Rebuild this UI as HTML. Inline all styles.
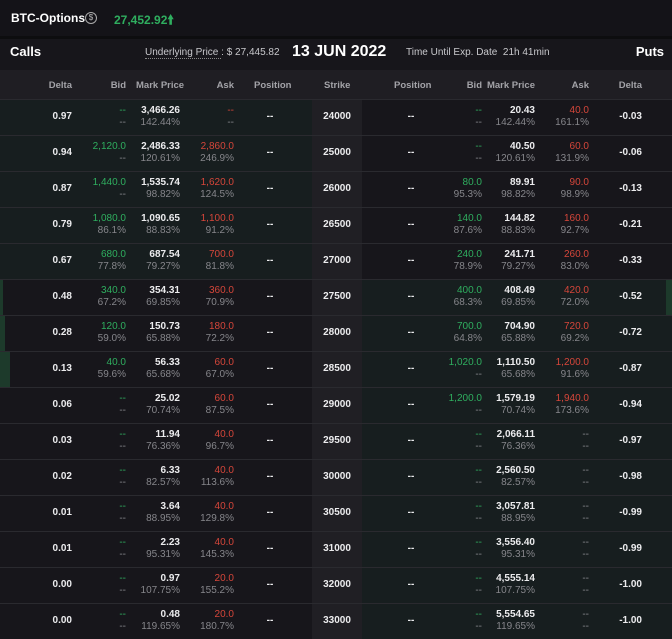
<!DOCTYPE html><html><head><style>
*{margin:0;padding:0;box-sizing:border-box}
body{width:672px;height:638px;background:#17161b;font-family:"Liberation Sans",sans-serif;position:relative;overflow:hidden;color:#e8e8ea}
.a{position:absolute;white-space:nowrap}
.top{left:0;top:0;width:672px;height:36px;background:#141318}
.sep{left:0;top:36px;width:672px;height:3px;background:#0d0d0f}
.bar2{left:0;top:39px;width:672px;height:31px;background:#17161b}
.hdr{left:0;top:70px;width:672px;height:29px;background:#1f1e23}
.h{top:80px;font-size:9.5px;font-weight:bold;color:#a3a3a8}
.row{position:absolute;left:0;width:672px;height:36px;border-top:1px solid #2a2a2f}
.itmc{position:absolute;left:0;top:0;width:312px;height:35px;background:#171e1f}
.itmp{position:absolute;left:362px;top:0;width:310px;height:35px;background:#171e1f}
.stk{position:absolute;left:312px;top:0;width:50px;height:35px;background:#201f24}
.row span{position:absolute;white-space:nowrap;font-size:10px}
.t{top:5px;font-weight:bold;color:#ececee}
.b{top:17px;color:#86868b}
.m{top:11px;font-weight:bold;color:#ececee}
.g{color:#2fae5f!important;font-weight:normal!important}
.r{color:#d5463a!important;font-weight:normal!important}
.dl{right:600px}.cb{right:546px}.cm{right:492px}.ca{right:438px}
.cp{left:250px;width:40px;text-align:center}
.sk{left:312px;width:50px;text-align:center}
.pp{left:391px;width:40px;text-align:center}
.pb{right:190px}.pm{right:137px}.pa{right:83px}.pd{right:30px}
.gb{position:absolute;left:0;top:0;height:35px;background:#1d3a2b}
</style></head><body>
<div class="a top"></div><div class="a sep"></div><div class="a bar2"></div><div class="a hdr"></div>
<div class="a" style="left:11px;top:11px;font-size:12px;font-weight:bold;color:#fff">BTC-Options</div>
<div class="a" style="left:85px;top:12px;width:12px;height:12px;border:1.5px solid #aaa;border-radius:50%;font-size:8px;color:#bbb;text-align:center;line-height:9px">$</div>
<div class="a" style="left:114px;top:11px;font-size:12px;font-weight:bold;color:#2fae5f">27,452.92<b style="font-size:13px">&#129049;</b></div>
<div class="a" style="left:10px;top:44px;font-size:13px;font-weight:bold;color:#fff">Calls</div>
<div class="a" style="left:145px;top:47px;font-size:10px;color:#c8c8cc"><span style="border-bottom:1px dotted #888">Underlying Price </span>: $ 27,445.82</div>
<div class="a" style="left:292px;top:43px;font-size:16px;font-weight:bold;color:#fff">13 JUN 2022</div>
<div class="a" style="left:406px;top:47px;font-size:10px;color:#c8c8cc">Time Until Exp. Date &nbsp;21h 41min</div>
<div class="a" style="right:8px;top:44px;font-size:13px;font-weight:bold;color:#fff">Puts</div>
<div class="a h" style="right:600px">Delta</div><div class="a h" style="right:546px">Bid</div><div class="a h" style="left:136px">Mark Price</div><div class="a h" style="right:438px">Ask</div><div class="a h" style="left:254px">Position</div><div class="a h" style="left:324px">Strike</div><div class="a h" style="left:394px">Position</div><div class="a h" style="right:190px">Bid</div><div class="a h" style="right:137px">Mark Price</div><div class="a h" style="right:83px">Ask</div><div class="a h" style="right:30px">Delta</div>

<div class="row" style="top:99px"><div class="itmc"></div><div class="stk"></div><span class="m dl">0.97</span><span class="t cb g">--</span><span class="b cb">--</span><span class="t cm">3,466.26</span><span class="b cm">142.44%</span><span class="t ca r">--</span><span class="b ca">--</span><span class="m cp">--</span><span class="m sk">24000</span><span class="m pp">--</span><span class="t pb g">--</span><span class="b pb">--</span><span class="t pm">20.43</span><span class="b pm">142.44%</span><span class="t pa r">40.0</span><span class="b pa">161.1%</span><span class="m pd">-0.03</span></div>
<div class="row" style="top:135px"><div class="itmc"></div><div class="stk"></div><span class="m dl">0.94</span><span class="t cb g">2,120.0</span><span class="b cb">--</span><span class="t cm">2,486.33</span><span class="b cm">120.61%</span><span class="t ca r">2,860.0</span><span class="b ca">246.9%</span><span class="m cp">--</span><span class="m sk">25000</span><span class="m pp">--</span><span class="t pb g">--</span><span class="b pb">--</span><span class="t pm">40.50</span><span class="b pm">120.61%</span><span class="t pa r">60.0</span><span class="b pa">131.9%</span><span class="m pd">-0.06</span></div>
<div class="row" style="top:171px"><div class="itmc"></div><div class="stk"></div><span class="m dl">0.87</span><span class="t cb g">1,440.0</span><span class="b cb">--</span><span class="t cm">1,535.74</span><span class="b cm">98.82%</span><span class="t ca r">1,620.0</span><span class="b ca">124.5%</span><span class="m cp">--</span><span class="m sk">26000</span><span class="m pp">--</span><span class="t pb g">80.0</span><span class="b pb">95.3%</span><span class="t pm">89.91</span><span class="b pm">98.82%</span><span class="t pa r">90.0</span><span class="b pa">98.9%</span><span class="m pd">-0.13</span></div>
<div class="row" style="top:207px"><div class="itmc"></div><div class="stk"></div><span class="m dl">0.79</span><span class="t cb g">1,080.0</span><span class="b cb">86.1%</span><span class="t cm">1,090.65</span><span class="b cm">88.83%</span><span class="t ca r">1,100.0</span><span class="b ca">91.2%</span><span class="m cp">--</span><span class="m sk">26500</span><span class="m pp">--</span><span class="t pb g">140.0</span><span class="b pb">87.6%</span><span class="t pm">144.82</span><span class="b pm">88.83%</span><span class="t pa r">160.0</span><span class="b pa">92.7%</span><span class="m pd">-0.21</span></div>
<div class="row" style="top:243px"><div class="itmc"></div><div class="stk"></div><span class="m dl">0.67</span><span class="t cb g">680.0</span><span class="b cb">77.8%</span><span class="t cm">687.54</span><span class="b cm">79.27%</span><span class="t ca r">700.0</span><span class="b ca">81.8%</span><span class="m cp">--</span><span class="m sk">27000</span><span class="m pp">--</span><span class="t pb g">240.0</span><span class="b pb">78.9%</span><span class="t pm">241.71</span><span class="b pm">79.27%</span><span class="t pa r">260.0</span><span class="b pa">83.0%</span><span class="m pd">-0.33</span></div>
<div class="row" style="top:279px"><div class="gb" style="width:3px"></div><div class="itmp"></div><div class="gb" style="left:666px;width:6px"></div><div class="stk"></div><span class="m dl">0.48</span><span class="t cb g">340.0</span><span class="b cb">67.2%</span><span class="t cm">354.31</span><span class="b cm">69.85%</span><span class="t ca r">360.0</span><span class="b ca">70.9%</span><span class="m cp">--</span><span class="m sk">27500</span><span class="m pp">--</span><span class="t pb g">400.0</span><span class="b pb">68.3%</span><span class="t pm">408.49</span><span class="b pm">69.85%</span><span class="t pa r">420.0</span><span class="b pa">72.0%</span><span class="m pd">-0.52</span></div>
<div class="row" style="top:315px"><div class="gb" style="width:5px"></div><div class="itmp"></div><div class="stk"></div><span class="m dl">0.28</span><span class="t cb g">120.0</span><span class="b cb">59.0%</span><span class="t cm">150.73</span><span class="b cm">65.88%</span><span class="t ca r">180.0</span><span class="b ca">72.2%</span><span class="m cp">--</span><span class="m sk">28000</span><span class="m pp">--</span><span class="t pb g">700.0</span><span class="b pb">64.8%</span><span class="t pm">704.90</span><span class="b pm">65.88%</span><span class="t pa r">720.0</span><span class="b pa">69.2%</span><span class="m pd">-0.72</span></div>
<div class="row" style="top:351px"><div class="gb" style="width:10px"></div><div class="itmp"></div><div class="stk"></div><span class="m dl">0.13</span><span class="t cb g">40.0</span><span class="b cb">59.6%</span><span class="t cm">56.33</span><span class="b cm">65.68%</span><span class="t ca r">60.0</span><span class="b ca">67.0%</span><span class="m cp">--</span><span class="m sk">28500</span><span class="m pp">--</span><span class="t pb g">1,020.0</span><span class="b pb">--</span><span class="t pm">1,110.50</span><span class="b pm">65.68%</span><span class="t pa r">1,200.0</span><span class="b pa">91.6%</span><span class="m pd">-0.87</span></div>
<div class="row" style="top:387px"><div class="itmp"></div><div class="stk"></div><span class="m dl">0.06</span><span class="t cb g">--</span><span class="b cb">--</span><span class="t cm">25.02</span><span class="b cm">70.74%</span><span class="t ca r">60.0</span><span class="b ca">87.5%</span><span class="m cp">--</span><span class="m sk">29000</span><span class="m pp">--</span><span class="t pb g">1,200.0</span><span class="b pb">--</span><span class="t pm">1,579.19</span><span class="b pm">70.74%</span><span class="t pa r">1,940.0</span><span class="b pa">173.6%</span><span class="m pd">-0.94</span></div>
<div class="row" style="top:423px"><div class="itmp"></div><div class="stk"></div><span class="m dl">0.03</span><span class="t cb g">--</span><span class="b cb">--</span><span class="t cm">11.94</span><span class="b cm">76.36%</span><span class="t ca r">40.0</span><span class="b ca">96.7%</span><span class="m cp">--</span><span class="m sk">29500</span><span class="m pp">--</span><span class="t pb g">--</span><span class="b pb">--</span><span class="t pm">2,066.11</span><span class="b pm">76.36%</span><span class="b pa" style="top:5px">--</span><span class="b pa">--</span><span class="m pd">-0.97</span></div>
<div class="row" style="top:459px"><div class="itmp"></div><div class="stk"></div><span class="m dl">0.02</span><span class="t cb g">--</span><span class="b cb">--</span><span class="t cm">6.33</span><span class="b cm">82.57%</span><span class="t ca r">40.0</span><span class="b ca">113.6%</span><span class="m cp">--</span><span class="m sk">30000</span><span class="m pp">--</span><span class="t pb g">--</span><span class="b pb">--</span><span class="t pm">2,560.50</span><span class="b pm">82.57%</span><span class="b pa" style="top:5px">--</span><span class="b pa">--</span><span class="m pd">-0.98</span></div>
<div class="row" style="top:495px"><div class="itmp"></div><div class="stk"></div><span class="m dl">0.01</span><span class="t cb g">--</span><span class="b cb">--</span><span class="t cm">3.64</span><span class="b cm">88.95%</span><span class="t ca r">40.0</span><span class="b ca">129.8%</span><span class="m cp">--</span><span class="m sk">30500</span><span class="m pp">--</span><span class="t pb g">--</span><span class="b pb">--</span><span class="t pm">3,057.81</span><span class="b pm">88.95%</span><span class="b pa" style="top:5px">--</span><span class="b pa">--</span><span class="m pd">-0.99</span></div>
<div class="row" style="top:531px"><div class="itmp"></div><div class="stk"></div><span class="m dl">0.01</span><span class="t cb g">--</span><span class="b cb">--</span><span class="t cm">2.23</span><span class="b cm">95.31%</span><span class="t ca r">40.0</span><span class="b ca">145.3%</span><span class="m cp">--</span><span class="m sk">31000</span><span class="m pp">--</span><span class="t pb g">--</span><span class="b pb">--</span><span class="t pm">3,556.40</span><span class="b pm">95.31%</span><span class="b pa" style="top:5px">--</span><span class="b pa">--</span><span class="m pd">-0.99</span></div>
<div class="row" style="top:567px"><div class="itmp"></div><div class="stk"></div><span class="m dl">0.00</span><span class="t cb g">--</span><span class="b cb">--</span><span class="t cm">0.97</span><span class="b cm">107.75%</span><span class="t ca r">20.0</span><span class="b ca">155.2%</span><span class="m cp">--</span><span class="m sk">32000</span><span class="m pp">--</span><span class="t pb g">--</span><span class="b pb">--</span><span class="t pm">4,555.14</span><span class="b pm">107.75%</span><span class="b pa" style="top:5px">--</span><span class="b pa">--</span><span class="m pd">-1.00</span></div>
<div class="row" style="top:603px"><div class="itmp"></div><div class="stk"></div><span class="m dl">0.00</span><span class="t cb g">--</span><span class="b cb">--</span><span class="t cm">0.48</span><span class="b cm">119.65%</span><span class="t ca r">20.0</span><span class="b ca">180.7%</span><span class="m cp">--</span><span class="m sk">33000</span><span class="m pp">--</span><span class="t pb g">--</span><span class="b pb">--</span><span class="t pm">5,554.65</span><span class="b pm">119.65%</span><span class="b pa" style="top:5px">--</span><span class="b pa">--</span><span class="m pd">-1.00</span></div>
</body></html>
